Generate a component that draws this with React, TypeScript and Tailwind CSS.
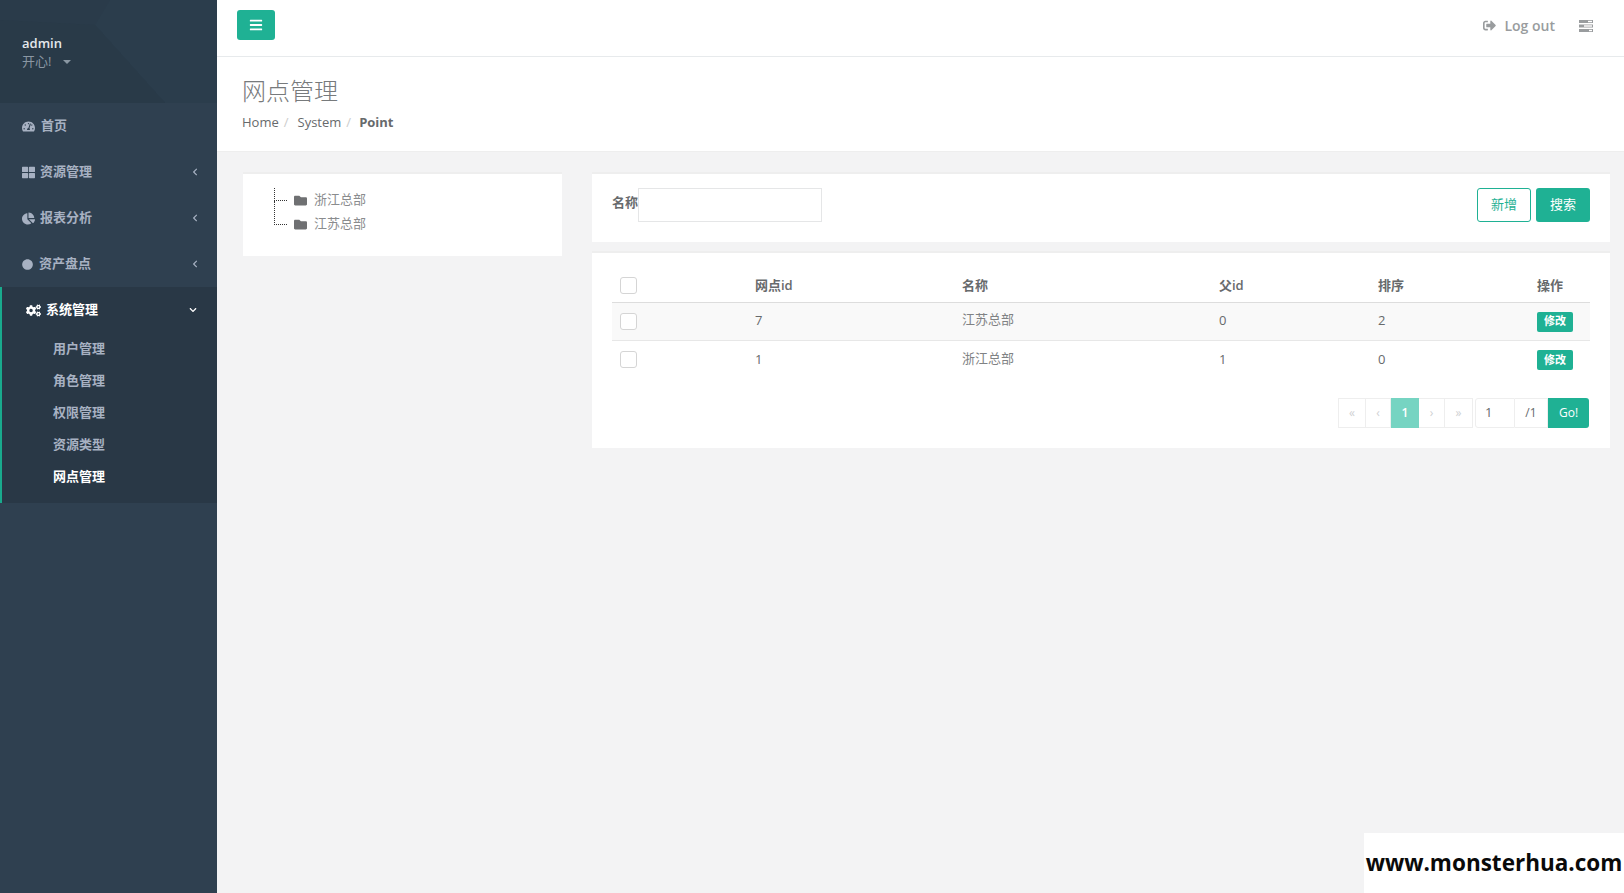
import { FaChevronDown, FaChevronLeft, FaChartPie, FaCircle, FaCogs, FaFolder, FaBars, FaSignOutAlt, FaTachometerAlt, FaThLarge } from "react-icons/fa";
import type { ReactNode } from "react";

const fontStack = "font-['Open_Sans','Noto_Sans_CJK_SC',sans-serif]";

const navItems: { label: string; icon: ReactNode; iconBox: string; arrow: boolean }[] = [
  { label: "首页", icon: <FaTachometerAlt className="size-[13px]" />, iconBox: "w-[19px]", arrow: false },
  { label: "资源管理", icon: <FaThLarge className="size-[13px]" />, iconBox: "w-[18px]", arrow: true },
  { label: "报表分析", icon: <FaChartPie className="size-[13px]" />, iconBox: "w-[18px]", arrow: true },
  { label: "资产盘点", icon: <FaCircle className="size-[11px]" />, iconBox: "w-[17px]", arrow: true },
];

const subItems = ["用户管理", "角色管理", "权限管理", "资源类型", "网点管理"];

const rows = [
  { id: "7", name: "江苏总部", parent: "0", sort: "2" },
  { id: "1", name: "浙江总部", parent: "1", sort: "0" },
];

function Checkbox() {
  return <span className="block size-[17px] rounded-[3px] border border-[#d5d5d5] bg-white" />;
}

function Sidebar() {
  return (
    <aside className="flex w-[217px] shrink-0 flex-col bg-[#2f4050]">
      <div className="relative h-[103px] overflow-hidden bg-[#2a3b4a] pl-[22px] pt-[34px]">
        <svg className="absolute inset-0" width="217" height="103" viewBox="0 0 217 103">
          <polygon points="95,25 165,103 217,103 217,0 110,0" fill="#2b3d4c" />
          <polygon points="0,20 95,25 165,103 0,103" fill="#293a48" />
        </svg>
        <div className="relative text-[13px] leading-[18px] font-semibold text-[#e4e8ec]">admin</div>
        <div className="relative flex items-center gap-[12px] text-[13px] leading-[18px] text-[#8a97a3]">
          开心!
          <span className="mt-[2px] border-x-4 border-t-4 border-x-transparent border-t-[#8a97a3]" />
        </div>
      </div>

      {navItems.map((item) => (
        <div key={item.label} className="flex h-[46px] items-center pl-[22px] pr-[18px] text-[13px] font-semibold text-[#a7b1c2]">
          <span className={`flex shrink-0 items-center ${item.iconBox}`}>{item.icon}</span>
          <span className="flex-1">{item.label}</span>
          {item.arrow && <FaChevronLeft className="size-[8px]" />}
        </div>
      ))}

      <div className="h-[216px] border-l-2 border-[#19aa8d] bg-[#293846]">
        <div className="flex h-[46px] items-center pl-[24px] pr-[20px] text-[13px] font-semibold text-white">
          <FaCogs className="mr-[5px] size-[15px] shrink-0" />
          <span className="flex-1">系统管理</span>
          <FaChevronDown className="size-[8px]" />
        </div>
        <ul className="pl-[51px]">
          {subItems.map((sub, i) => (
            <li
              key={sub}
              className={`flex h-[32px] items-center text-[13px] font-semibold ${i === 4 ? "text-white" : "text-[#a7b1c2]"}`}
            >
              {sub}
            </li>
          ))}
        </ul>
      </div>
    </aside>
  );
}

function TopBar() {
  return (
    <header className="flex h-[57px] shrink-0 items-start justify-between border-b border-[#e7eaec] bg-white pl-[20px] pr-[31px]">
      <button className="mt-[10px] flex h-[30px] w-[38px] items-center justify-center rounded-[3px] bg-[#1fb194] text-white">
        <FaBars className="size-[14px]" />
      </button>
      <div className="flex h-[51px] items-center text-[14px] text-[#999c9e]">
        <FaSignOutAlt className="mr-[8px] size-[13px]" />
        <span className="mr-[24px] font-semibold">Log out</span>
        <svg width="14" height="12" viewBox="0 0 14 12" fill="#999c9e">
          <rect x="0" y="0" width="14" height="3" />
          <rect x="0" y="4.5" width="14" height="3" />
          <rect x="0" y="9" width="14" height="3" />
          <rect x="9" y="0.8" width="4" height="1.4" fill="#fff" />
          <rect x="5" y="5.3" width="8" height="1.4" fill="#fff" />
          <rect x="10" y="9.8" width="3" height="1.4" fill="#fff" />
        </svg>
      </div>
    </header>
  );
}

function PageHeading() {
  return (
    <div className="h-[95px] shrink-0 border-b border-[#eeeeee] bg-white pl-[25px] pt-[18px]">
      <h2 className="text-[24px] leading-[32px] font-light text-[#777a7c]">网点管理</h2>
      <div className="mt-[6px] flex text-[13px] leading-[18px] text-[#676a6c]">
        <span>Home</span>
        <span className="ml-[5px] mr-[9px] text-[#ccc]">/</span>
        <span>System</span>
        <span className="ml-[5px] mr-[8px] text-[#ccc]">/</span>
        <span className="font-bold">Point</span>
      </div>
    </div>
  );
}

function TreeCard() {
  return (
    <div className="h-[84px] w-[319px] shrink-0 border-t-2 border-[#eeeeee] bg-white pl-[31px] pt-[14px]">
      <div className="relative text-[13px] text-[#8a8c8e]">
        {["浙江总部", "江苏总部"].map((name) => (
          <div key={name} className="flex h-[24px] items-center">
            <span className="mr-[7px] h-[13px] w-[13px] self-start border-b border-l border-dotted border-[#333]" />
            <FaFolder className="mr-[6px] size-[13px] text-[#6f7072]" />
            <span className="ml-[1px]">{name}</span>
          </div>
        ))}
        <span className="absolute left-0 top-[13px] h-[12px] border-l border-dotted border-[#333]" />
      </div>
    </div>
  );
}

function FilterCard() {
  return (
    <div className="flex h-[70px] items-start justify-between border-t-2 border-[#eeeeee] bg-white px-[20px] pt-[14px]">
      <div className="flex items-start">
        <label className="mt-[5px] text-[13px] font-semibold text-[#676a6c]">名称</label>
        <input className="h-[34px] w-[184px] border border-[#e5e6e7] bg-white outline-none" />
      </div>
      <div className="flex gap-[5px]">
        <button className="h-[34px] w-[54px] rounded-[3px] border border-[#1fb194] bg-white text-[13px] text-[#1fb194]">新增</button>
        <button className="h-[34px] w-[54px] rounded-[3px] bg-[#1fb194] text-[13px] text-white">搜索</button>
      </div>
    </div>
  );
}

function Pager() {
  const cell = "flex h-[30px] items-center justify-center border border-[#eeeeee] text-[12px]";
  return (
    <div className="mt-[20px] flex justify-end pr-px">
      <span className={`${cell} w-[28px] text-[#cfd1d3]`}>«</span>
      <span className={`${cell} w-[25px] border-l-0 text-[#cfd1d3]`}>‹</span>
      <span className="flex h-[30px] w-[28px] items-center justify-center bg-[#76d4c2] text-[12px] font-semibold text-white">1</span>
      <span className={`${cell} w-[26px] border-l-0 text-[#cfd1d3]`}>›</span>
      <span className={`${cell} mr-[2px] w-[28px] border-l-0 text-[#cfd1d3]`}>»</span>
      <span className={`${cell} w-[40px] justify-start rounded-l-[3px] pl-[9px] text-[13px] text-[#676a6c]`}>1</span>
      <span className={`${cell} w-[33px] border-l-0 text-[#676a6c]`}>/1</span>
      <button className="h-[30px] w-[41px] rounded-r-[3px] bg-[#1fb194] text-[12px] text-white">Go!</button>
    </div>
  );
}

function TableCard() {
  return (
    <div className="mt-[9px] h-[197px] border-t-2 border-[#eeeeee] bg-white px-[20px] pt-[16px]">
      <table className="w-[978px] table-fixed border-collapse text-[13px] text-[#676a6c]">
        <colgroup>
          <col className="w-[135px]" />
          <col className="w-[207px]" />
          <col className="w-[257px]" />
          <col className="w-[159px]" />
          <col className="w-[159px]" />
          <col className="w-[61px]" />
        </colgroup>
        <thead>
          <tr className="h-[33px] border-b border-[#dddddd] text-left">
            <th className="px-[8px]"><Checkbox /></th>
            <th className="px-[8px] font-semibold">网点id</th>
            <th className="px-[8px] font-semibold">名称</th>
            <th className="px-[8px] font-semibold">父id</th>
            <th className="px-[8px] font-semibold">排序</th>
            <th className="px-[8px] font-semibold">操作</th>
          </tr>
        </thead>
        <tbody>
          {rows.map((row, i) => (
            <tr key={row.id} className={`h-[38px] ${i === 0 ? "border-b border-[#e7e7e7] bg-[#f9f9f9]" : ""}`}>
              <td className="px-[8px]"><Checkbox /></td>
              <td className="px-[8px]">{row.id}</td>
              <td className="px-[8px] pb-[2px] text-[#808284]">{row.name}</td>
              <td className="px-[8px]">{row.parent}</td>
              <td className="px-[8px]">{row.sort}</td>
              <td className="px-[8px] pt-[1px]">
                <span className="flex h-[20px] w-[36px] items-center justify-center rounded-[2px] bg-[#1fb194] text-[11px] font-semibold text-white">修改</span>
              </td>
            </tr>
          ))}
        </tbody>
      </table>
      <Pager />
    </div>
  );
}

export default function App() {
  return (
    <div className={`relative flex h-[893px] w-[1624px] overflow-hidden bg-[#f3f3f4] ${fontStack}`}>
      <Sidebar />
      <main className="flex min-w-0 flex-1 flex-col">
        <TopBar />
        <PageHeading />
        <div className="flex gap-[30px] pl-[26px] pr-[14px] pt-[20px]">
          <TreeCard />
          <div className="min-w-0 flex-1">
            <FilterCard />
            <TableCard />
          </div>
        </div>
      </main>
      <div className="absolute bottom-0 right-0 flex h-[60px] w-[260px] items-center justify-center bg-white text-[22.5px] font-bold whitespace-nowrap text-[#0a0a0a]">
        www.monsterhua.com
      </div>
    </div>
  );
}
